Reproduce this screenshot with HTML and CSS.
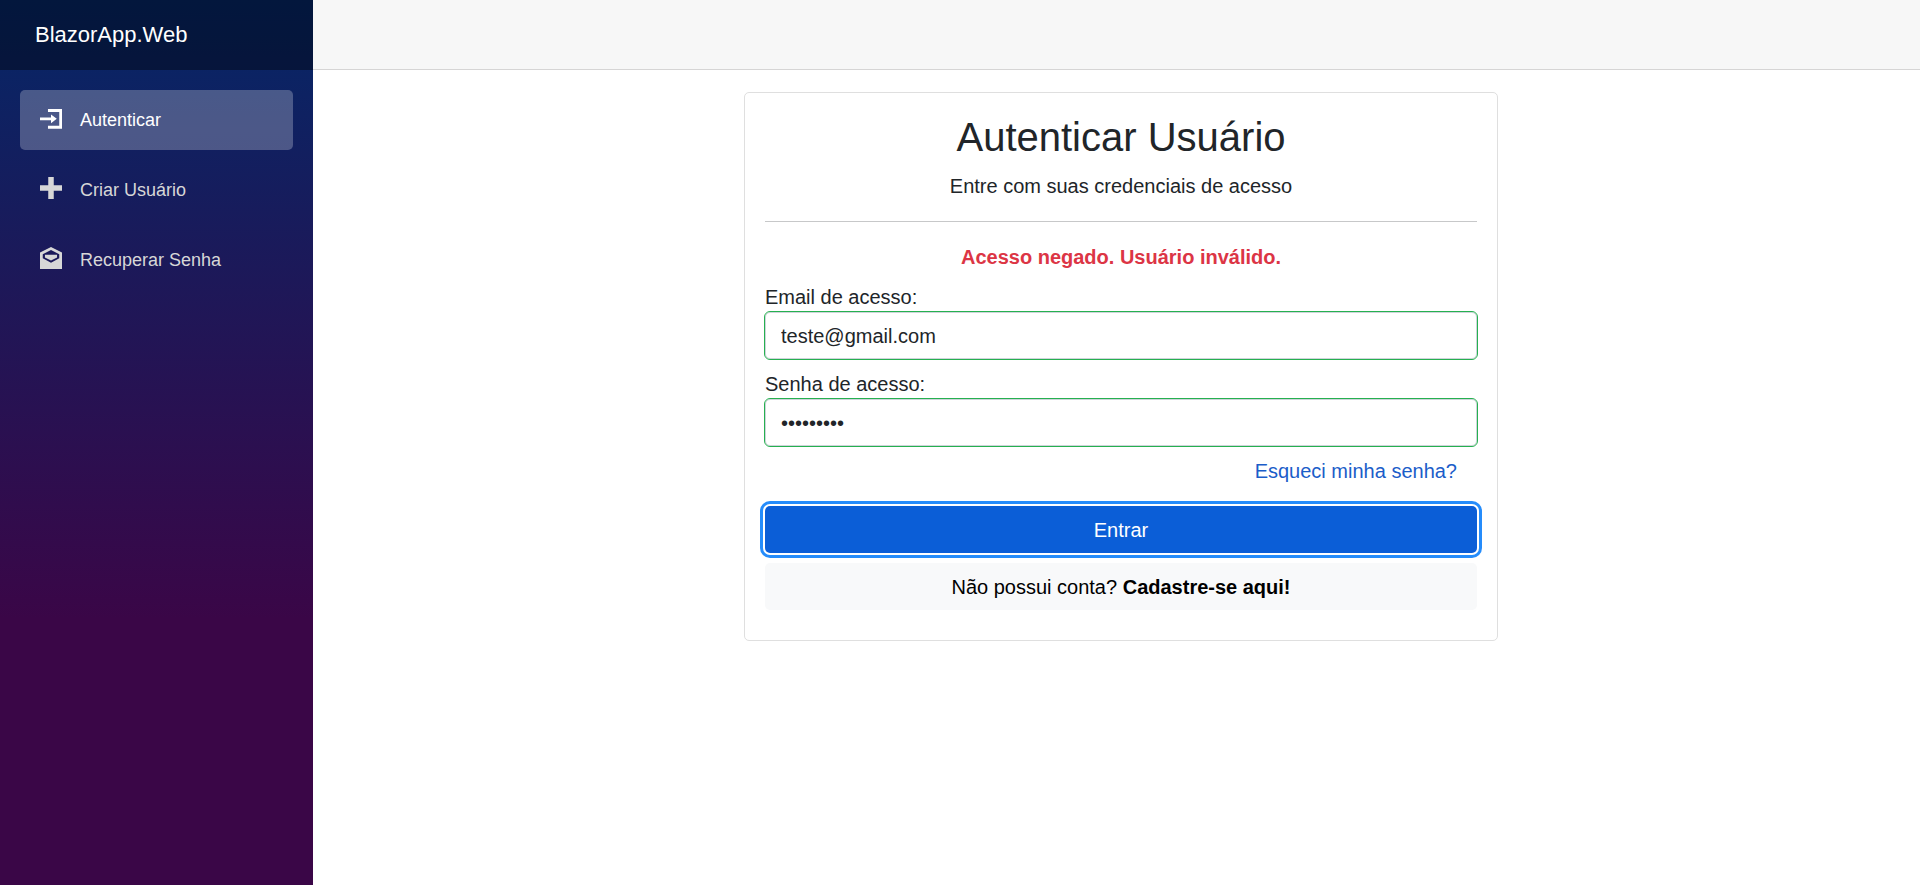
FILE: index.html
```html
<!DOCTYPE html>
<html lang="pt-BR">
<head>
<meta charset="utf-8">
<meta name="viewport" content="width=device-width, initial-scale=1">
<title>BlazorApp.Web</title>
<link rel="stylesheet" href="styles.css">
</head>
<body>
<div class="page">
  <aside class="sidebar">
    <div class="brand-row"><a class="brand" href="#">BlazorApp.Web</a></div>
    <nav class="nav">
      <a class="nav-link active" href="#"><svg class="icon" viewBox="0 0 8 8" aria-hidden="true"><path d="M2.9.7v1.1h4.1v5h-4.1v1.1h5.1v-7.2zm1.1 2v1.1h-4v1h4v1.1l2.1-1.6z"/></svg>Autenticar</a>
      <a class="nav-link" href="#"><svg class="icon" viewBox="0 0 8 8" aria-hidden="true"><path d="M3 0v3h-3v2h3v3h2v-3h3v-2h-3v-3h-2z"/></svg>Criar Usuário</a>
      <a class="nav-link" href="#"><svg class="icon" viewBox="0 0 8 8" aria-hidden="true"><path fill-rule="evenodd" d="M4 0l-4 2v6h8v-6zM4 1.13l3 1.5v1.5l-3 1.6-3-1.6v-1.5zM1.8 2.8v1l2.2 1.1 2.2-1.1v-1z"/></svg>Recuperar Senha</a>
    </nav>
  </aside>
  <main class="main">
    <header class="top-row"></header>
    <article class="content">
      <section class="card">
        <h1 class="title">Autenticar Usuário</h1>
        <p class="subtitle">Entre com suas credenciais de acesso</p>
        <hr class="divider">
        <p class="error" role="alert">Acesso negado. Usuário inválido.</p>
        <form class="form">
          <div class="field">
            <label class="label" for="email">Email de acesso:</label>
            <input class="input" id="email" type="email" value="teste@gmail.com">
          </div>
          <div class="field">
            <label class="label" for="senha">Senha de acesso:</label>
            <input class="input" id="senha" type="password" value="teste1234">
          </div>
          <div class="forgot"><a class="forgot-link" href="#">Esqueci minha senha?</a></div>
          <button class="btn btn-primary" type="submit">Entrar</button>
          <a class="btn btn-light" href="#">Não possui conta? <strong>Cadastre-se aqui!</strong></a>
        </form>
      </section>
    </article>
  </main>
</div>
</body>
</html>
```
FILE: styles.css
```css
*, *::before, *::after { box-sizing: border-box; }

body {
  margin: 0;
  font-family: "Liberation Sans", Arial, sans-serif;
  font-size: 20px;
  line-height: 30px;
  color: #212529;
  background: #fff;
}

.page { display: flex; min-height: 100vh; }

.sidebar {
  flex: none;
  width: 313px;
  background: linear-gradient(180deg, rgb(5, 39, 103) 0%, #3a0647 70%);
}

.brand-row {
  display: flex;
  align-items: center;
  height: 70px;
  padding: 0 35px;
  background: rgba(0, 0, 0, 0.4);
}

.brand { font-size: 22px; color: #fff; text-decoration: none; }

.nav {
  display: flex;
  flex-direction: column;
  gap: 10px;
  padding: 20px;
}

.nav-link {
  display: flex;
  align-items: center;
  gap: 18px;
  height: 60px;
  padding: 0 20px;
  border-radius: 5px;
  font-size: 18px;
  color: #d7d7d7;
  text-decoration: none;
}

.nav-link.active { background: rgba(255, 255, 255, 0.25); color: #fff; }

.icon { width: 22px; height: 22px; margin-bottom: 4px; fill: currentColor; }

.main { flex: 1; min-width: 0; }

.top-row {
  height: 70px;
  background: #f7f7f7;
  border-bottom: 1px solid #d6d5d5;
}

.content { padding: 22px 31px 0 40px; }

.card {
  width: calc(50% - 14px);
  margin: 0 auto;
  padding: 20px 20px 30px;
  border: 1px solid #dfdfdf;
  border-radius: 5px;
}

.title {
  margin: 0 0 10px;
  font-size: 40px;
  font-weight: 400;
  line-height: 48px;
  text-align: center;
}

.subtitle { margin: 0; text-align: center; }

.divider {
  height: 1px;
  margin: 20px 0;
  border: 0;
  background: #c7c8c9;
}

.error { margin: 0 0 10px; font-weight: 700; text-align: center; color: #dc3545; }

.form { display: flex; flex-direction: column; gap: 10px; }

.field { display: flex; flex-direction: column; }

.input {
  width: 100%;
  height: 47px;
  padding: 1px 15px 0;
  border: 1px solid #ced4da;
  border-radius: 5px;
  outline: 1px solid #26b050;
  font: inherit;
  color: inherit;
  background: #fff;
}

.forgot { padding: 0 20px 10px; text-align: right; }

.forgot-link { color: #1b5dc9; text-decoration: none; }

.btn {
  display: block;
  width: 100%;
  height: 47px;
  padding: 1px 0 0;
  border: 0;
  border-radius: 5px;
  font: inherit;
  line-height: 46px;
  text-align: center;
  text-decoration: none;
}

.btn-primary {
  color: #fff;
  background: #0b5ed7;
  box-shadow: 0 0 0 2px #fff, 0 0 0 5px #258cfb;
}

.btn-light { color: #000; background: #f8f9fa; }
```
